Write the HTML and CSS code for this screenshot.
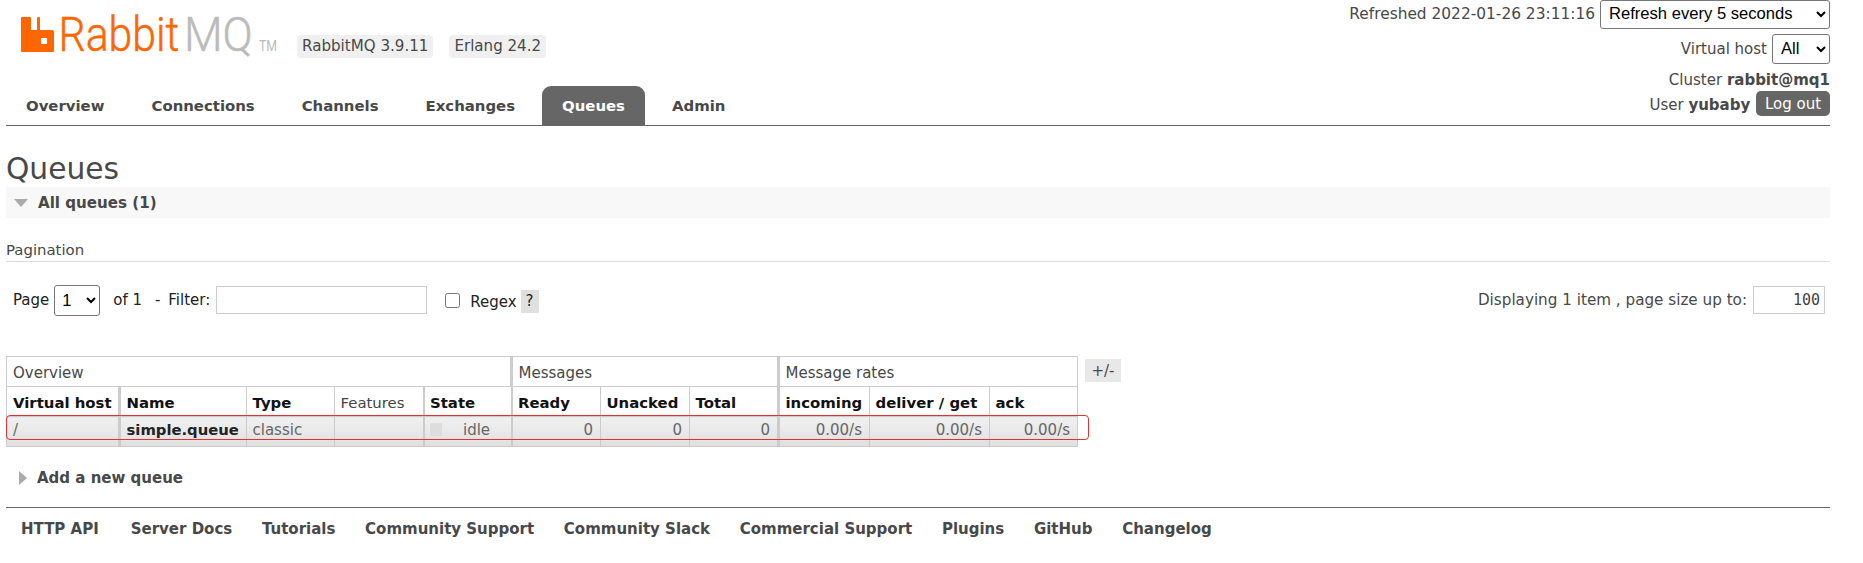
FILE: index.html
```html
<!DOCTYPE html>
<html lang="en">
<head>
<meta charset="utf-8">
<title>RabbitMQ Management</title>
<link rel="stylesheet" href="styles.css">
</head>
<body>
<header class="header">
  <div class="brand">
    <svg class="logo" width="270" height="42" viewBox="0 0 270 42">
      <path class="logo-orange" fill-rule="evenodd" d="M7 3a1 1 0 0 1 1-1h8a1 1 0 0 1 1 1v12h6V3a1 1 0 0 1 1-1h1a1 1 0 0 1 1 1v12h12a2 2 0 0 1 2 2v19a1 1 0 0 1-1 1H8a1 1 0 0 1-1-1zM27 23v6h6v-6z"/>
      <text class="logo-word logo-orange" transform="translate(44.5 36) scale(.89 1)">Rabbit</text>
      <text class="logo-word logo-grey" transform="translate(170 36) scale(.93 1)">MQ</text>
      <text class="logo-tm logo-grey" transform="translate(245 36) scale(.88 1)">TM</text>
    </svg>
    <span class="badge">RabbitMQ 3.9.11</span>
    <span class="badge">Erlang 24.2</span>
  </div>
  <div class="status">
    <div class="status-line"><span class="status-label">Refreshed 2022-01-26 23:11:16</span>
      <select class="refresh-select"><option>Refresh every 5 seconds</option></select>
    </div>
    <div class="status-line"><span>Virtual host</span>
      <select class="vhost-select"><option>All</option></select>
    </div>
    <div class="status-text cluster">Cluster <b>rabbit@mq1</b></div>
    <div class="status-text user">User <b>yubaby</b> <button class="logout">Log out</button></div>
  </div>
  <nav class="tabs">
    <a class="tab">Overview</a>
    <a class="tab">Connections</a>
    <a class="tab">Channels</a>
    <a class="tab">Exchanges</a>
    <a class="tab tab-active">Queues</a>
    <a class="tab">Admin</a>
  </nav>
</header>

<main class="main">
  <h1 class="title">Queues</h1>
  <section class="section-head"><span class="tri-down"></span>All queues (1)</section>

  <h3 class="pagination-title">Pagination</h3>
  <div class="pagination">
    <div class="pager">
      <span>Page</span>
      <select class="page-select"><option>1</option></select>
      <span class="of">of 1</span>
      <span class="filter-label">- Filter:</span>
      <input class="filter" type="text">
      <input class="regex-check" type="checkbox">
      <span class="regex-label">Regex</span>
      <span class="help">?</span>
    </div>
    <div class="page-size">
      <span>Displaying 1 item , page size up to:</span>
      <input class="size-input" type="text" value="100">
    </div>
  </div>

  <div class="table-wrap">
    <table class="queues">
      <colgroup>
        <col class="c1"><col class="c2"><col class="c3"><col class="c4"><col class="c5">
        <col class="c6"><col class="c7"><col class="c8"><col class="c9"><col class="c10"><col class="c11">
      </colgroup>
      <thead>
        <tr class="group-row">
          <th colspan="5" class="sep">Overview</th>
          <th colspan="3" class="sep">Messages</th>
          <th colspan="3">Message rates</th>
        </tr>
        <tr class="head-row">
          <th class="sep">Virtual host</th>
          <th>Name</th>
          <th>Type</th>
          <th class="light sep-thin">Features</th>
          <th class="sep-thin">State</th>
          <th>Ready</th>
          <th>Unacked</th>
          <th class="sep">Total</th>
          <th>incoming</th>
          <th>deliver / get</th>
          <th>ack</th>
        </tr>
      </thead>
      <tbody>
        <tr class="data-row">
          <td class="sep">/</td>
          <td class="queue-name">simple.queue</td>
          <td>classic</td>
          <td class="sep-thin"></td>
          <td class="sep-thin"><span class="state-box"></span><span class="state">idle</span></td>
          <td class="num">0</td>
          <td class="num">0</td>
          <td class="num sep">0</td>
          <td class="num">0.00/s</td>
          <td class="num">0.00/s</td>
          <td class="num">0.00/s</td>
        </tr>
      </tbody>
    </table>
    <span class="plus-minus">+/-</span>
    <span class="highlight"></span>
  </div>

  <section class="add-queue"><span class="tri-right"></span>Add a new queue</section>
</main>

<footer class="footer">
  <a class="footer-first">HTTP API</a>
  <a>Server Docs</a>
  <a>Tutorials</a>
  <a>Community Support</a>
  <a>Community Slack</a>
  <a>Commercial Support</a>
  <a>Plugins</a>
  <a>GitHub</a>
  <a>Changelog</a>
</footer>
</body>
</html>
```

FILE: styles.css
```css
* { box-sizing: border-box; }
html, body { margin: 0; height: 563px; overflow: hidden; background: #fff; }
body {
  padding: 0 33px 0 6px;
  font-family: Verdana, "DejaVu Sans", sans-serif;
  font-size: 15px;
  color: #484848;
}

/* header */
.header {
  position: relative;
  display: flex;
  justify-content: space-between;
  height: 126px;
  border-bottom: 1px solid #666;
}
.brand { display: flex; align-items: flex-start; padding-top: 35px; }
.logo { position: absolute; left: 8px; top: 15px; overflow: visible; }
.logo-orange { fill: #f60; }
.logo-grey { fill: #bbb; }
.logo-word { font-family: Roboto, sans-serif; font-weight: 300; font-size: 48px; stroke-width: .5px; }
.logo-word.logo-orange { stroke: #f60; }
.logo-word.logo-grey { stroke: #bbb; }
.logo-tm { font-family: Roboto, sans-serif; font-size: 14px; }
.badge {
  height: 23px;
  padding: 0 5px;
  line-height: 23px;
  border-radius: 4px;
  background: #f0f0f0;
  font-size: 15.1px;
  white-space: nowrap;
}
.brand .badge:first-of-type { margin-left: 291px; margin-right: 16px; }

.status { display: flex; flex-direction: column; align-items: flex-end; }
.status-line { display: flex; align-items: center; gap: 5px; white-space: nowrap; }
.status-label { font-size: 15.4px; padding-bottom: 2px; }
select {
  font-family: "Liberation Sans", Arial, sans-serif;
  font-size: 16.6px;
  color: #000;
  background: #fff;
  border: 1px solid #767676;
  border-radius: 3px;
}
.refresh-select { width: 230px; height: 29px; padding: 0 0 2px 4px; }
.status-line:nth-child(2) { margin-top: 5px; height: 30px; }
.vhost-select { width: 58px; height: 30px; padding: 0 0 2px 4px; }
.status-text { white-space: nowrap; }
.cluster { height: 24px; line-height: 28px; margin-top: 2px; }
.user { height: 28px; margin-top: 4px; }
.logout {
  width: 74px;
  height: 25px;
  margin: -3px 0 0 1px;
  padding: 0;
  border: 0;
  border-radius: 5px;
  background: #666;
  color: #fff;
  font: 15px "DejaVu Sans", sans-serif;
  vertical-align: middle;
}

.tabs {
  position: absolute;
  left: 0;
  bottom: 0;
  display: flex;
  height: 39px;
}
.tab {
  padding: 0 20px;
  line-height: 41px;
  font-weight: bold;
  font-size: 14.9px;
  border-radius: 9px 9px 0 0;
  white-space: nowrap;
}
.tab + .tab { margin-left: 7px; }
.tab-active { background: #666; color: #fff; }

/* main */
.title {
  margin: 25px 0 0;
  height: 36px;
  line-height: 36px;
  font-size: 29.7px;
  font-weight: normal;
}
.section-head {
  display: flex;
  align-items: center;
  height: 31px;
  background: #f8f8f8;
  padding-left: 8px;
  font-weight: bold;
  font-size: 15.1px;
}
.tri-down {
  width: 0; height: 0;
  margin-right: 10px;
  border: 7px solid transparent;
  border-top: 8px solid #aaa;
  border-bottom: 0;
}
.pagination-title {
  margin: 23px 0 0;
  font-size: 14.9px;
  font-weight: normal;
  line-height: 19px;
  border-bottom: 1px solid #ddd;
  height: 21px;
}
.pagination {
  display: flex;
  justify-content: space-between;
  height: 94px;
  padding: 22px 5px 0 7px;
}
.pager, .page-size { display: flex; align-items: center; height: 32px; white-space: nowrap; }
.pager { color: #222; font-size: 15px; }
.page-select { width: 46px; height: 31px; margin: 0 13px 0 5px; padding-left: 3px; }
.filter-label { margin: 0 6px 0 13px; word-spacing: 3px; }
.filter { width: 211px; height: 28px; border: 1px solid #ccc; }
.regex-check { width: 15px; height: 15px; margin: 0 10px 0 18px; }
.regex-label { margin-top: 3px; }
.help {
  width: 18px;
  height: 23px;
  margin: 3px 0 0 4px;
  line-height: 23px;
  text-align: center;
  background: #e0e0e0;
}
.page-size { gap: 6px; font-size: 15.2px; }
.size-input {
  width: 72px;
  height: 28px;
  padding: 0 4px;
  border: 1px solid #ccc;
  text-align: right;
  font: 15px "DejaVu Sans Mono", monospace;
  color: #444;
}

/* table */
.table-wrap { position: relative; display: flex; align-items: flex-start; }
.queues {
  border-collapse: collapse;
  table-layout: fixed;
  width: 1071px;
  font-size: 15px;
  color: #484848;
}
.c1 { width: 113px; } .c2 { width: 127px; } .c3 { width: 88px; } .c4 { width: 89px; } .c5 { width: 88px; }
.c6 { width: 89px; } .c7 { width: 89px; } .c8 { width: 89px; } .c9 { width: 91px; } .c10 { width: 120px; } .c11 { width: 88px; }
.queues th, .queues td {
  height: 30px;
  padding: 2px 7px 0 5.5px;
  border: 1px solid #ccc;
  text-align: left;
  white-space: nowrap;
  overflow: hidden;
}
.queues tr > :first-child { padding-left: 6px; }
.group-row th { font-weight: normal; }
.queues .head-row th { font-weight: bold; color: #111; padding-right: 0; font-size: 14.9px; }
.queues .head-row th.light { font-weight: normal; color: #444; }
.queues .sep { border-right-width: 3px; }
.queues .sep-thin { border-right-width: 2px; }
.queues .data-row td { background: linear-gradient(#f0f0f0, #e0e0e0); color: #666; padding-top: 0; padding-bottom: 4px; }
.queues .data-row .queue-name { font-weight: bold; color: #222; font-size: 14.8px; }
.queues .data-row .num { text-align: right; }
.state-box { display: inline-block; width: 12px; height: 13px; background: #ddd; vertical-align: -1px; margin-right: 21px; }
.state { border-bottom: 1px dotted #666; }
.plus-minus {
  width: 36px;
  height: 23px;
  margin: 3px 0 0 7px;
  line-height: 25px;
  text-align: center;
  background: #e8e8e8;
}
.highlight {
  position: absolute;
  left: 0;
  top: 59px;
  width: 1083px;
  height: 25px;
  border: 1px solid #e53030;
  border-radius: 4px;
}

.add-queue {
  display: flex;
  align-items: center;
  height: 30px;
  margin-top: 16px;
  padding-left: 13px;
  font-weight: bold;
  font-size: 15px;
}
.tri-right {
  width: 0; height: 0;
  margin-right: 10px;
  border: 7px solid transparent;
  border-left: 8px solid #aaa;
  border-right: 0;
}

/* footer */
.footer {
  display: flex;
  gap: 29.7px;
  margin-top: 14px;
  padding: 12px 0 0 15px;
  border-top: 1px solid #666;
  font-weight: bold;
  font-size: 15px;
  white-space: nowrap;
}
.footer-first { min-width: 80px; }
```
